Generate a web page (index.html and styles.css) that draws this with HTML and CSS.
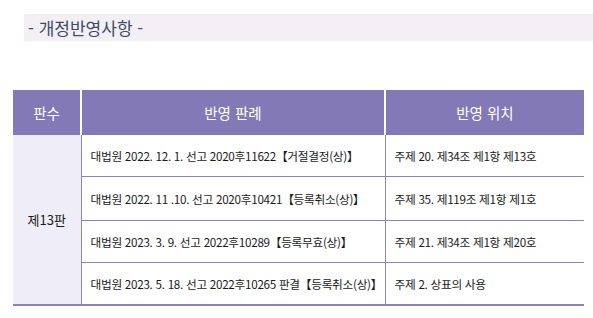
FILE: index.html
```html
<!DOCTYPE html>
<html lang="ko">
<head>
<meta charset="utf-8">
<link rel="stylesheet" href="styles.css">
</head>
<body>
<div class="title"><span>- 개정반영사항 -</span></div>
<table class="rev">
  <colgroup>
    <col class="c1"><col class="c2"><col class="c3">
  </colgroup>
  <thead>
    <tr><th>판수</th><th>반영 판례</th><th>반영 위치</th></tr>
  </thead>
  <tbody>
    <tr class="r1">
      <td class="ed" rowspan="4">제13판</td>
      <td>대법원 2022. 12. 1. 선고 2020후11622【거절결정(상)】</td>
      <td>주제 20. 제34조 제1항 제13호</td>
    </tr>
    <tr class="r2">
      <td>대법원 2022. 11 .10. 선고 2020후10421【등록취소(상)】</td>
      <td>주제 35. 제119조 제1항 제1호</td>
    </tr>
    <tr class="r3">
      <td>대법원 2023. 3. 9. 선고 2022후10289【등록무효(상)】</td>
      <td>주제 21. 제34조 제1항 제20호</td>
    </tr>
    <tr class="r4">
      <td>대법원 2023. 5. 18. 선고 2022후10265 판결【등록취소(상)】</td>
      <td>주제 2. 상표의 사용</td>
    </tr>
  </tbody>
</table>
</body>
</html>
```
FILE: styles.css
```css
html, body {
  margin: 0;
  padding: 0;
  background: #ffffff;
}
body {
  font-family: "Noto Sans CJK KR", "Noto Sans", sans-serif;
  color: #222222;
}
.title {
  margin: 14px 0 0 24px;
  height: 27px;
  background: #f4eff5;
  padding-left: 4px;
  display: flex;
  align-items: center;
}
.title span {
  font-size: 17px;
  color: #3c4a6c;
  line-height: 1;
}
.rev {
  margin: 49px 0 0 13px;
  width: 571px;
  border-collapse: collapse;
  table-layout: fixed;
}
.c1 { width: 68px; }
.c2 { width: 304px; }
.c3 { width: 199px; }
.rev th {
  background: #8379b6;
  color: #ffffff;
  font-weight: normal;
  font-size: 14.5px;
  height: 45px;
  padding: 0;
  text-align: center;
  border-left: 2px solid #ffffff;
}
.rev th:first-child { border-left: none; }
.rev td {
  font-size: 11.7px;
  letter-spacing: -0.3px;
  padding: 0 0 0 9px;
  border-left: 1px solid #8c87a6;
  border-bottom: 1px solid #8c87a6;
  white-space: nowrap;
  color: #1a1a1a;
}
.r1 td { height: 41px; }
.r2 td { height: 43px; }
.r3 td { height: 41px; }
.r4 td { height: 41px; border-bottom: 2px solid #8a85b1; }
.rev td.ed {
  background: #efeef8;
  border-left: none;
  border-bottom: 2px solid #8a85b1;
  text-align: center;
  padding: 0;
  font-size: 13px;
  letter-spacing: 0;
}
```
